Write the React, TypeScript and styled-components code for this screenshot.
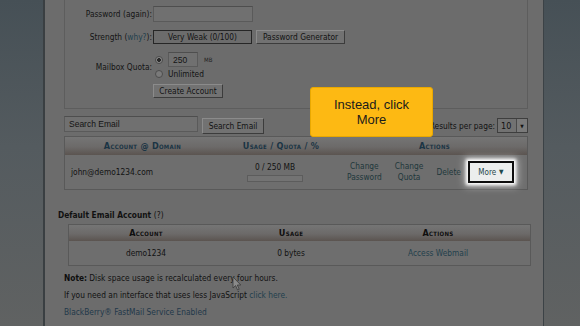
import React from 'react';
import styled, {createGlobalStyle} from 'styled-components';

const GlobalStyle = createGlobalStyle`
  html, body {
    margin: 0;
    padding: 0;
    width: 580px;
    height: 326px;
    overflow: hidden;
    background: #6c6c6c;
  }
  body {
    font-family: "DejaVu Sans Condensed", "DejaVu Sans", sans-serif;
    font-size: 8.3px;
    color: #121212;
  }
`;

const Page = styled.div`
  display: flex;
  width: 580px;
  height: 326px;
  overflow: hidden;
`;

const Rail = styled.div<{$side: 'left' | 'right'}>`
  flex: none;
  width: ${p => (p.$side === 'left' ? '43px' : '36px')};
  background: linear-gradient(180deg, #465056 0%, #545b5f 45%, #606262 100%);
  ${p =>
    p.$side === 'left'
      ? 'border-right: 2px solid #3a3f42;'
      : 'border-left: 1px solid #3c4246;'}
`;

const Main = styled.div`
  position: relative;
  flex: 1;
  display: flex;
  flex-direction: column;
  padding: 0 12px 0 13px;
  background: #6c6c6c;
`;

/*************************************************
 *                 Account form                  *
 *************************************************/
const FormBox = styled.div`
  margin: 0 3px 0 6px;
  padding: 6px 0 10px;
  border: 1px solid #5d5d5d;
  border-top: none;
  display: flex;
  flex-direction: column;
`;

const FormRow = styled.div<{$top?: number}>`
  display: flex;
  align-items: center;
  margin-top: ${p => p.$top ?? 0}px;
`;

const Label = styled.div`
  width: 87px;
  padding-right: 1px;
  text-align: right;
  white-space: nowrap;
  color: #141414;
`;

const Link = styled.span`
  color: #22404c;
`;

const TextInput = styled.div<{$w: number; $h?: number}>`
  box-sizing: border-box;
  width: ${p => p.$w}px;
  height: ${p => p.$h ?? 16}px;
  border: 1px solid #5a5a5a;
  border-top-color: #4e4e4e;
  background: #707070;
  display: flex;
  align-items: center;
  padding-left: 4px;
  font-family: "Liberation Sans", Arial, sans-serif;
  font-size: 8.5px;
  color: #141414;
`;

const StrengthBox = styled.div`
  box-sizing: border-box;
  width: 99px;
  height: 14px;
  border: 1px solid #262626;
  display: flex;
  align-items: center;
  justify-content: center;
  color: #131313;
`;

const Button = styled.div<{$w: number; $h?: number}>`
  box-sizing: border-box;
  width: ${p => p.$w}px;
  height: ${p => p.$h ?? 14}px;
  border: 1px solid;
  border-color: #8b8b8b #3c3c3c #3c3c3c #8b8b8b;
  background: #727272;
  display: flex;
  align-items: center;
  justify-content: center;
  white-space: nowrap;
  color: #131313;
`;

const QuotaControls = styled.div`
  display: flex;
  flex-direction: column;
`;

const QuotaLine = styled.div<{$h: number}>`
  display: flex;
  align-items: center;
  gap: 5px;
  height: ${p => p.$h}px;
`;

const Radio = styled.span<{$checked?: boolean}>`
  box-sizing: border-box;
  margin-left: 2px;
  width: 8px;
  height: 8px;
  border-radius: 50%;
  border: 1px solid #4c4c4c;
  background: ${p =>
    p.$checked
      ? 'radial-gradient(circle, #2a2a2a 0 1.6px, #8a8a8a 2.2px)'
      : '#7a7a7a'};
`;

const Units = styled.span`
  font-size: 6px;
  margin-left: 1px;
  color: #222;
`;

/*************************************************
 *                Search + table                 *
 *************************************************/
const SearchRow = styled.div`
  display: flex;
  align-items: flex-start;
  margin: 7px 3px 0 6px;
`;

const SearchButton = styled(Button)`
  margin: 2px 0 0 4px;
`;

const Spacer = styled.div`
  flex: 1;
`;

const PerPage = styled.div`
  display: flex;
  align-items: center;
  gap: 2px;
  margin-top: 2px;
  font-size: 8.3px;
`;

const Select = styled.div`
  box-sizing: border-box;
  width: 31px;
  height: 15px;
  border: 1px solid #3e3e3e;
  background: #727272;
  display: flex;
  align-items: stretch;
  font-size: 9px;
  span {
    flex: 1;
    display: flex;
    align-items: center;
    padding-left: 3px;
  }
`;

const SelectArrow = styled.div`
  width: 10px;
  border-left: 1px solid #4a4a4a;
  background: #7a7a7a;
  display: flex;
  align-items: center;
  justify-content: center;
  font-size: 5px;
`;

const Table = styled.div<{$cols: string; $ml: number; $mr: number; $top: number}>`
  display: grid;
  grid-template-columns: ${p => p.$cols};
  margin: ${p => p.$top}px ${p => p.$mr}px 0 ${p => p.$ml}px;
  border: 1px solid #595959;
`;

const HeadCell = styled.div<{$h: number; $dark?: boolean}>`
  height: ${p => p.$h}px;
  display: flex;
  align-items: center;
  justify-content: center;
  background: linear-gradient(180deg, #757575 0%, #6c6a69 55%, #5b5450 100%);
  font-weight: bold;
  font-variant: small-caps;
  font-size: 9px;
  letter-spacing: 0.3px;
  color: ${p => (p.$dark ? '#0e0e0e' : '#1a3444')};
`;

const Cell = styled.div<{$h: number; $align?: 'left' | 'center'}>`
  height: ${p => p.$h}px;
  display: flex;
  align-items: center;
  justify-content: ${p => (p.$align === 'left' ? 'flex-start' : 'center')};
  padding-left: ${p => (p.$align === 'left' ? '6px' : '0')};
  background: #6e6e6e;
  color: #121212;
`;

const UsageStack = styled.div`
  display: flex;
  flex-direction: column;
  align-items: center;
  gap: 3px;
  margin-right: 12px;
`;

const UsageBar = styled.div`
  width: 54px;
  height: 5px;
  border: 1px solid #5c5c5c;
  background: #737373;
`;

const ActionsCell = styled(Cell)`
  justify-content: flex-start;
  padding-left: 5px;
  gap: 13px;
`;

const ActionLink = styled.div`
  color: #20373b;
  text-align: center;
  line-height: 11px;
`;

const MoreButton = styled.div`
  box-sizing: border-box;
  width: 46px;
  height: 22px;
  margin-left: -6px;
  border: 2px solid #0d0d0d;
  background: #eceeed;
  box-shadow: 0 0 3px 2px #ffffff, 0 0 8px 3px rgba(255, 255, 255, 0.6);
  display: flex;
  align-items: center;
  justify-content: center;
  gap: 3px;
  color: #24474a;
  font-size: 8px;
`;

const Caret = styled.span`
  font-size: 6.5px;
  color: #1f4a4c;
`;

/*************************************************
 *              Default account & notes          *
 *************************************************/
const SectionTitle = styled.div`
  margin-top: 20px;
  line-height: 10px;
  font-size: 8.3px;
  font-weight: bold;
  color: #111;
  span {
    font-weight: normal;
  }
`;

const Note = styled.div<{$link?: boolean}>`
  margin: 7px 0 0 6px;
  line-height: 10px;
  white-space: nowrap;
  color: ${p => (p.$link ? '#22384a' : '#121212')};
  b {
    color: #0e0e0e;
  }
`;

const Callout = styled.div`
  position: absolute;
  left: 265px;
  top: 87px;
  width: 123px;
  height: 50px;
  box-sizing: border-box;
  border: 1px solid #e9a800;
  border-radius: 3px;
  background: #fdb913;
  display: flex;
  align-items: center;
  justify-content: center;
  text-align: center;
  font-family: "Liberation Sans", Arial, sans-serif;
  font-size: 13px;
  line-height: 15px;
  color: #1b1b1b;
`;

const Cursor = styled.svg`
  position: absolute;
  left: 187px;
  top: 276px;
`;

export default function App() {
  return (
    <>
      <GlobalStyle />
      <Page>
        <Rail $side="left" />
        <Main>
          <FormBox>
            <FormRow>
              <Label>Password (again):</Label>
              <TextInput $w={100} />
            </FormRow>
            <FormRow $top={8}>
              <Label>
                Strength (<Link>why?</Link>):
              </Label>
              <StrengthBox>Very Weak (0/100)</StrengthBox>
              <Button $w={89} style={{marginLeft: 4}}>
                Password Generator
              </Button>
            </FormRow>
            <FormRow $top={8}>
              <Label>Mailbox Quota:</Label>
              <QuotaControls>
                <QuotaLine $h={15}>
                  <Radio $checked />
                  <TextInput $w={30} $h={15}>
                    250
                  </TextInput>
                  <Units>MB</Units>
                </QuotaLine>
                <QuotaLine $h={14}>
                  <Radio />
                  <span>Unlimited</span>
                </QuotaLine>
              </QuotaControls>
            </FormRow>
            <FormRow $top={3}>
              <Label />
              <Button $w={70}>Create Account</Button>
            </FormRow>
          </FormBox>

          <SearchRow>
            <TextInput $w={134}>Search Email</TextInput>
            <SearchButton $w={62} $h={16}>
              Search Email
            </SearchButton>
            <Spacer />
            <PerPage>
              Results per page:
              <Select>
                <span>10</span>
                <SelectArrow>▼</SelectArrow>
              </Select>
            </PerPage>
          </SearchRow>

          <Table $cols="155px 122px 1fr" $ml={6} $mr={3} $top={2}>
            <HeadCell $h={18}>Account @ Domain</HeadCell>
            <HeadCell $h={18}>Usage / Quota / %</HeadCell>
            <HeadCell $h={18}>Actions</HeadCell>
            <Cell $h={34} $align="left">
              john@demo1234.com
            </Cell>
            <Cell $h={34}>
              <UsageStack>
                <span>0 / 250 MB</span>
                <UsageBar />
              </UsageStack>
            </Cell>
            <ActionsCell $h={34}>
              <ActionLink>
                Change
                <br />
                Password
              </ActionLink>
              <ActionLink>
                Change
                <br />
                Quota
              </ActionLink>
              <ActionLink>Delete</ActionLink>
              <MoreButton>
                More<Caret>▼</Caret>
              </MoreButton>
            </ActionsCell>
          </Table>

          <SectionTitle>
            Default Email Account <span>(?)</span>
          </SectionTitle>

          <Table $cols="154px 136px 158px 1fr" $ml={10} $mr={0} $top={4}>
            <HeadCell $h={16} $dark>
              Account
            </HeadCell>
            <HeadCell $h={16} $dark>
              Usage
            </HeadCell>
            <HeadCell $h={16} $dark>
              Actions
            </HeadCell>
            <HeadCell $h={16} $dark />
            <Cell $h={24}>demo1234</Cell>
            <Cell $h={24}>0 bytes</Cell>
            <Cell $h={24}>
              <Link>Access Webmail</Link>
            </Cell>
            <Cell $h={24} />
          </Table>

          <Note>
            <b>Note:</b> Disk space usage is recalculated every four hours.
          </Note>
          <Note>
            If you need an interface that uses less JavaScript{' '}
            <Link>click here.</Link>
          </Note>
          <Note $link>BlackBerry® FastMail Service Enabled</Note>

          <Callout>
            Instead, click
            <br />
            More
          </Callout>

          <Cursor width="10" height="15" viewBox="0 0 10 15">
            <path
              d="M1 1 L1 12 L3.6 9.6 L5.6 14 L7.2 13.3 L5.3 9 L8.8 9 Z"
              fill="#8a8a8a"
              stroke="#3a3a3a"
              strokeWidth="0.8"
            />
          </Cursor>
        </Main>
        <Rail $side="right" />
      </Page>
    </>
  );
}
